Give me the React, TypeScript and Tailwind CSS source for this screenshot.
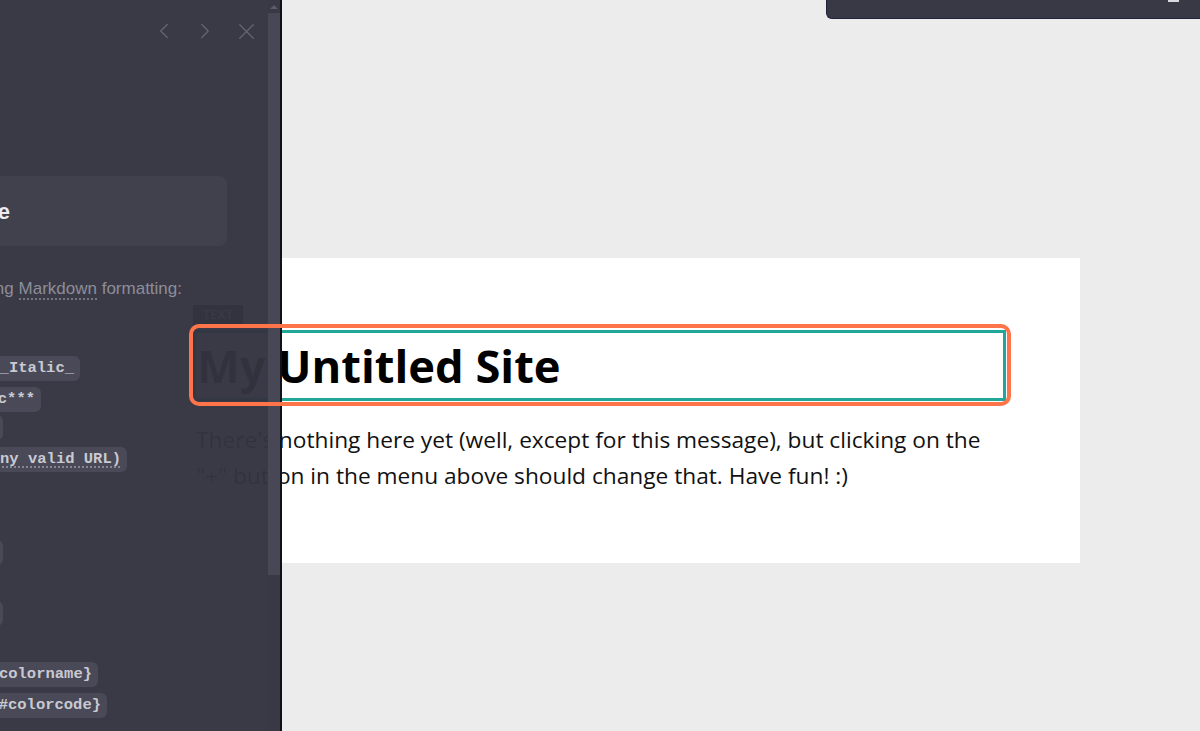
import { ChevronLeft, ChevronRight, X } from "lucide-react";

const chips = [
  { text: "*Italic* or _Italic_", end: "w-[80px]", gap: "mt-0" },
  { text: "***Bold Italic***", end: "w-[41px]", gap: "mt-[6px]" },
  { text: "~~Strike~~", end: "w-[3px]", gap: "mt-[3px]" },
  { text: "[Link](any valid URL)", end: "w-[127px]", gap: "mt-[7px]", dotted: true },
  { text: "# Big", end: "w-[3px]", gap: "mt-[68px]" },
  { text: "## Small", end: "w-[3px]", gap: "mt-[36px]" },
  { text: "{color:colorname}", end: "w-[98px]", gap: "mt-[36px]" },
  { text: "{color:#colorcode}", end: "w-[107px]", gap: "mt-[6px]" },
];

const Sidebar = () => {
  return (
    <div className="absolute left-0 top-0 h-full w-[282px] flex">
      {/* panel body */}
      <div className="w-[268px] h-full bg-[#343440]/[0.97] flex flex-col overflow-hidden">
        <div className="flex justify-end items-center gap-[15px] pr-[8px] pt-[19px] h-[43px] text-[#666674]">
          <ChevronLeft size={26} strokeWidth={1.1} />
          <ChevronRight size={26} strokeWidth={1.1} />
          <X size={27} strokeWidth={1.05} />
        </div>

        {/* heading card */}
        <div className="mt-[133px] w-[227px] h-[70px] bg-[#41414e] rounded-r-lg flex items-center justify-end pr-[217px]">
          <span className="whitespace-nowrap text-[22px] font-bold text-[#ececf2] font-['Liberation_Sans',sans-serif]">
            Site Title
          </span>
        </div>

        <div className="mt-[33px] w-[182px] h-[20px] flex justify-end items-center">
          <span className="whitespace-nowrap text-[17px] text-[#8d8d99] font-['Liberation_Sans',sans-serif]">
            You can style text using{" "}
            <span className="border-b-2 border-dotted border-[#8d8d99]/70 leading-[18px]">Markdown</span>{" "}
            formatting:
          </span>
        </div>

        <div className="mt-[57px] flex flex-col">
          {chips.map((c) => (
            <div key={c.text} className={`${c.gap} ${c.end} h-[25px] flex justify-end`}>
              <span
                className={`whitespace-nowrap h-[25px] flex items-center pl-[6px] pr-[6px] rounded-md bg-[#494957] text-[15.5px] font-bold text-[#c9c9d2] font-['Liberation_Mono',monospace] ${
                  c.dotted ? "underline decoration-dotted underline-offset-4 decoration-[#9a9aa6]" : ""
                }`}
              >
                {c.text}
              </span>
            </div>
          ))}
        </div>
      </div>

      {/* scrollbar */}
      <div className="w-[12px] h-full bg-[#393945] flex flex-col">
        <div className="h-[13px] flex items-center justify-center">
          <div className="w-0 h-0 border-l-[4px] border-r-[4px] border-b-[4px] border-l-transparent border-r-transparent border-b-[#5c5c6a]" />
        </div>
        <div className="h-[562px] bg-[#474755]" />
      </div>
      <div className="w-[2px] h-full bg-[#111118]" />
    </div>
  );
};

const App = () => {
  return (
    <div className="relative w-[1200px] h-[731px] overflow-hidden bg-[#ececec] font-['Open_Sans',sans-serif]">
      {/* top-right toolbar */}
      <div className="absolute right-0 top-0 w-[374px] h-[19px] bg-[#393945] rounded-bl-md border-b border-l border-[#22223a]">
        <div className="absolute left-[341px] top-0 w-[11px] h-[2px] bg-[#d8d8de]" />
      </div>

      {/* site card */}
      <div className="ml-[120px] mt-[258px] w-[960px] h-[305px] bg-white pl-[73px] pr-[74px] pt-[47px]">
        <div className="w-[50px] h-[20px] bg-[#2a2a33] text-white text-[13px] tracking-wide flex items-center justify-center">
          TEXT
        </div>
        <div className="mt-[5px] h-[71px] border-[3px] border-[#22a699] flex items-center pl-[1px]">
          <h1 className="text-[45.3px] font-bold text-black leading-none">My Untitled Site</h1>
        </div>
        <p className="mt-[21px] text-[22.7px] leading-[36px] text-[#111] pl-[3px]">
          There's nothing here yet (well, except for this message), but clicking on the
          <br />
          "+" button in the menu above should change that. Have fun! :)
        </p>
      </div>

      <Sidebar />

      {/* highlight annotation */}
      <div className="absolute left-[189px] top-[324px] w-[822px] h-[82px] border-[4px] border-[#ff7448] rounded-[10px]" />
    </div>
  );
};

export default App;
